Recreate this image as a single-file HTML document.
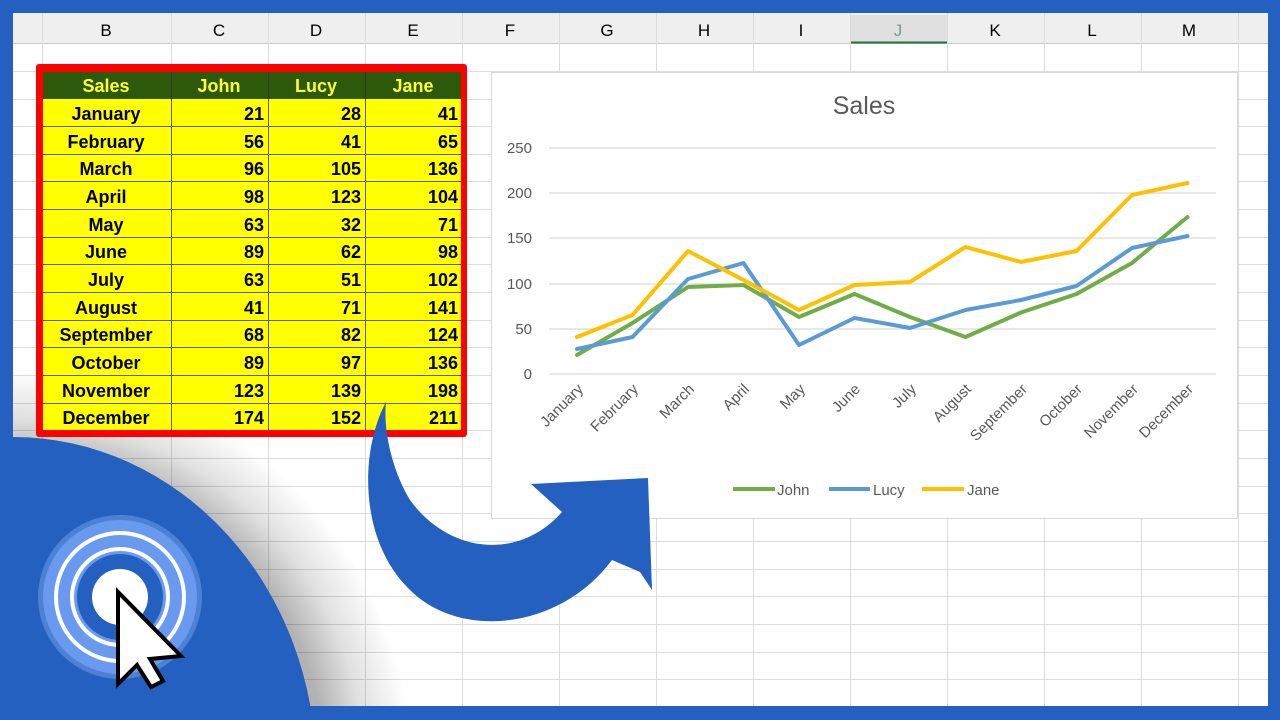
<!DOCTYPE html>
<html><head><meta charset="utf-8"><style>
html,body{margin:0;width:1280px;height:720px;overflow:hidden}
body{background:#2360c0;font-family:"Liberation Sans",sans-serif;position:relative}
#sheet{position:absolute;left:13px;top:13px;width:1255px;height:693px;background:#fff;overflow:hidden}
.n{font-family:"Liberation Sans Narrow","Liberation Sans",sans-serif}
</style></head><body>
<div id="sheet">
<svg width="1255" height="693" style="position:absolute;left:0;top:0;display:block">
<defs>
<radialGradient id="sh" gradientUnits="userSpaceOnUse" cx="0" cy="757" r="400">
<stop offset="0.78" stop-color="#000" stop-opacity="0.3"/>
<stop offset="0.88" stop-color="#000" stop-opacity="0.12"/>
<stop offset="1" stop-color="#000" stop-opacity="0"/>
</radialGradient>
</defs>
<rect x="0" y="0" width="1255" height="30" fill="#efefef"/>
<line x1="0" y1="30.5" x2="1255" y2="30.5" stroke="#c8c8c8"/>
<g fill="#000" font-size="17" text-anchor="middle" font-family="Liberation Sans">
<text x="93" y="23">B</text><text x="206" y="23">C</text><text x="303" y="23">D</text><text x="400" y="23">E</text><text x="497" y="23">F</text><text x="594" y="23">G</text><text x="691" y="23">H</text><text x="788" y="23">I</text><text x="885" y="23" fill="#1e6e3c">J</text><text x="982" y="23">K</text><text x="1079" y="23">L</text><text x="1176" y="23">M</text>
</g>
<rect x="837" y="2" width="97" height="28" fill="#d2d2d2" opacity="0.5"/>
<line x1="837" y1="29.5" x2="934" y2="29.5" stroke="#217346" stroke-width="2"/>
<g stroke="#dcdcdc">
<line x1="29.5" y1="0" x2="29.5" y2="693"/><line x1="158.5" y1="0" x2="158.5" y2="693"/><line x1="255.5" y1="0" x2="255.5" y2="693"/><line x1="352.5" y1="0" x2="352.5" y2="693"/><line x1="449.5" y1="0" x2="449.5" y2="693"/><line x1="546.5" y1="0" x2="546.5" y2="693"/><line x1="643.5" y1="0" x2="643.5" y2="693"/><line x1="740.5" y1="0" x2="740.5" y2="693"/><line x1="837.5" y1="0" x2="837.5" y2="693"/><line x1="934.5" y1="0" x2="934.5" y2="693"/><line x1="1031.5" y1="0" x2="1031.5" y2="693"/><line x1="1128.5" y1="0" x2="1128.5" y2="693"/><line x1="1225.5" y1="0" x2="1225.5" y2="693"/>
<line x1="0" y1="58.5" x2="1255" y2="58.5"/><line x1="0" y1="86.5" x2="1255" y2="86.5"/><line x1="0" y1="113.5" x2="1255" y2="113.5"/><line x1="0" y1="141.5" x2="1255" y2="141.5"/><line x1="0" y1="168.5" x2="1255" y2="168.5"/><line x1="0" y1="196.5" x2="1255" y2="196.5"/><line x1="0" y1="224.5" x2="1255" y2="224.5"/><line x1="0" y1="251.5" x2="1255" y2="251.5"/><line x1="0" y1="279.5" x2="1255" y2="279.5"/><line x1="0" y1="307.5" x2="1255" y2="307.5"/><line x1="0" y1="334.5" x2="1255" y2="334.5"/><line x1="0" y1="362.5" x2="1255" y2="362.5"/><line x1="0" y1="390.5" x2="1255" y2="390.5"/><line x1="0" y1="417.5" x2="1255" y2="417.5"/><line x1="0" y1="445.5" x2="1255" y2="445.5"/><line x1="0" y1="473.5" x2="1255" y2="473.5"/><line x1="0" y1="500.5" x2="1255" y2="500.5"/><line x1="0" y1="528.5" x2="1255" y2="528.5"/><line x1="0" y1="556.5" x2="1255" y2="556.5"/><line x1="0" y1="583.5" x2="1255" y2="583.5"/><line x1="0" y1="611.5" x2="1255" y2="611.5"/><line x1="0" y1="639.5" x2="1255" y2="639.5"/><line x1="0" y1="666.5" x2="1255" y2="666.5"/>
</g>
<circle cx="0" cy="757" r="400" fill="url(#sh)"/>
</svg>
</div>

<svg width="1280" height="720" style="position:absolute;left:0;top:0;display:block">
<rect x="491.5" y="72.5" width="746" height="446" fill="#fff" stroke="#d9d9d9"/>
<text class="n" x="864" y="114" font-size="25" fill="#595959" text-anchor="middle">Sales</text>
<g stroke="#d9d9d9" stroke-width="1.3">
<line x1="549" y1="148" x2="1216" y2="148"/><line x1="549" y1="193" x2="1216" y2="193"/><line x1="549" y1="238" x2="1216" y2="238"/><line x1="549" y1="284" x2="1216" y2="284"/><line x1="549" y1="329" x2="1216" y2="329"/><line x1="549" y1="374" x2="1216" y2="374"/>
</g>
<g class="n" font-size="15" fill="#595959" text-anchor="end">
<text x="532" y="153">250</text><text x="532" y="198">200</text><text x="532" y="243">150</text><text x="532" y="289">100</text><text x="532" y="334">50</text><text x="532" y="379">0</text>
</g>
<g class="n" font-size="15" fill="#595959" text-anchor="end">
<text transform="translate(584,390) rotate(-45)">January</text>
<text transform="translate(639,390) rotate(-45)">February</text>
<text transform="translate(695,390) rotate(-45)">March</text>
<text transform="translate(750,390) rotate(-45)">April</text>
<text transform="translate(806,390) rotate(-45)">May</text>
<text transform="translate(861,390) rotate(-45)">June</text>
<text transform="translate(917,390) rotate(-45)">July</text>
<text transform="translate(972,390) rotate(-45)">August</text>
<text transform="translate(1028,390) rotate(-45)">September</text>
<text transform="translate(1083,390) rotate(-45)">October</text>
<text transform="translate(1139,390) rotate(-45)">November</text>
<text transform="translate(1194,390) rotate(-45)">December</text>
</g>
<g fill="none" stroke-width="4" stroke-linejoin="round" stroke-linecap="round">
<polyline stroke="#70ad47" points="577,355 632.5,323 688,287 743.5,285 799,317 854.5,294 910,317 965.5,337 1021,312.5 1076.5,294 1132,263 1187.5,217"/>
<polyline stroke="#5b9bd5" points="577,349 632.5,337 688,279 743.5,263 799,345 854.5,318 910,328 965.5,310 1021,300 1076.5,286 1132,248 1187.5,236"/>
<polyline stroke="#ffc000" points="577,337 632.5,315 688,251 743.5,280 799,310 854.5,285 910,282 965.5,247 1021,262 1076.5,251 1132,195 1187.5,183"/>
</g>
<g stroke-width="4"><line x1="733" y1="489" x2="775" y2="489" stroke="#70ad47"/><line x1="829" y1="489" x2="870" y2="489" stroke="#5b9bd5"/><line x1="922" y1="489" x2="964" y2="489" stroke="#ffc000"/></g>
<g class="n" font-size="15" fill="#595959"><text x="777" y="495">John</text><text x="873" y="495">Lucy</text><text x="967" y="495">Jane</text></g>

<rect x="0" y="706" width="1280" height="14" fill="#2360c0"/>
<ellipse cx="13" cy="770" rx="303" ry="333" fill="#2360c0"/>
<rect x="0" y="0" width="13" height="720" fill="#2360c0"/>

<rect x="36" y="64" width="431" height="373" rx="3" fill="#ff0000"/>
<rect x="43" y="72" width="418" height="358" fill="#ffff00"/>
<rect x="43" y="72" width="418" height="27" fill="#2d5a0a"/>
<g stroke="#333" stroke-width="1" opacity="0.8">
<line x1="171.5" y1="72" x2="171.5" y2="430"/><line x1="268.5" y1="72" x2="268.5" y2="430"/><line x1="365.5" y1="72" x2="365.5" y2="430"/>
<line x1="43" y1="126.5" x2="461" y2="126.5"/><line x1="43" y1="154.5" x2="461" y2="154.5"/><line x1="43" y1="181.5" x2="461" y2="181.5"/><line x1="43" y1="209.5" x2="461" y2="209.5"/><line x1="43" y1="237.5" x2="461" y2="237.5"/><line x1="43" y1="264.5" x2="461" y2="264.5"/><line x1="43" y1="292.5" x2="461" y2="292.5"/><line x1="43" y1="320.5" x2="461" y2="320.5"/><line x1="43" y1="347.5" x2="461" y2="347.5"/><line x1="43" y1="375.5" x2="461" y2="375.5"/><line x1="43" y1="403.5" x2="461" y2="403.5"/>
</g>
<g font-size="18" font-weight="bold" fill="#ffff33" text-anchor="middle">
<text x="106" y="92">Sales</text><text x="219" y="92">John</text><text x="316" y="92">Lucy</text><text x="413" y="92">Jane</text>
</g>
<g font-size="18" font-weight="bold" fill="#000">
<g text-anchor="middle">
<text x="106" y="120">January</text><text x="106" y="148">February</text><text x="106" y="175">March</text><text x="106" y="203">April</text><text x="106" y="231">May</text><text x="106" y="258">June</text><text x="106" y="286">July</text><text x="106" y="314">August</text><text x="106" y="341">September</text><text x="106" y="369">October</text><text x="106" y="397">November</text><text x="106" y="424">December</text>
</g>
<g text-anchor="end">
<text x="264" y="120">21</text><text x="361" y="120">28</text><text x="458" y="120">41</text>
<text x="264" y="148">56</text><text x="361" y="148">41</text><text x="458" y="148">65</text>
<text x="264" y="175">96</text><text x="361" y="175">105</text><text x="458" y="175">136</text>
<text x="264" y="203">98</text><text x="361" y="203">123</text><text x="458" y="203">104</text>
<text x="264" y="231">63</text><text x="361" y="231">32</text><text x="458" y="231">71</text>
<text x="264" y="258">89</text><text x="361" y="258">62</text><text x="458" y="258">98</text>
<text x="264" y="286">63</text><text x="361" y="286">51</text><text x="458" y="286">102</text>
<text x="264" y="314">41</text><text x="361" y="314">71</text><text x="458" y="314">141</text>
<text x="264" y="341">68</text><text x="361" y="341">82</text><text x="458" y="341">124</text>
<text x="264" y="369">89</text><text x="361" y="369">97</text><text x="458" y="369">136</text>
<text x="264" y="397">123</text><text x="361" y="397">139</text><text x="458" y="397">198</text>
<text x="264" y="424">174</text><text x="361" y="424">152</text><text x="458" y="424">211</text>
</g></g>

<path d="M386,402 C360,450 358,540 410,590 C460,640 560,630 612,560 L640,572 L652,590 L648,478 L531,484 L562,512 C520,560 450,555 410,500 C392,470 383,430 386,402 Z" fill="#2360c0"/>

<circle cx="120" cy="597" r="82" fill="#9fc0f5" opacity="0.35"/>
<circle cx="120" cy="597" r="77" fill="#6a9af0"/>
<circle cx="120" cy="597" r="64" fill="none" stroke="#fff" stroke-width="4"/>
<circle cx="120" cy="597" r="48" fill="none" stroke="#fff" stroke-width="4"/>
<circle cx="120" cy="597" r="43" fill="#2360c0"/>
<circle cx="120" cy="597" r="28" fill="#fff"/>
<path d="M118,592 L118,684 L137,665 L151,687 L163,681 L150,659 L181,656 Z" fill="#fff" stroke="#000" stroke-width="4"/>
</svg>
</body></html>
